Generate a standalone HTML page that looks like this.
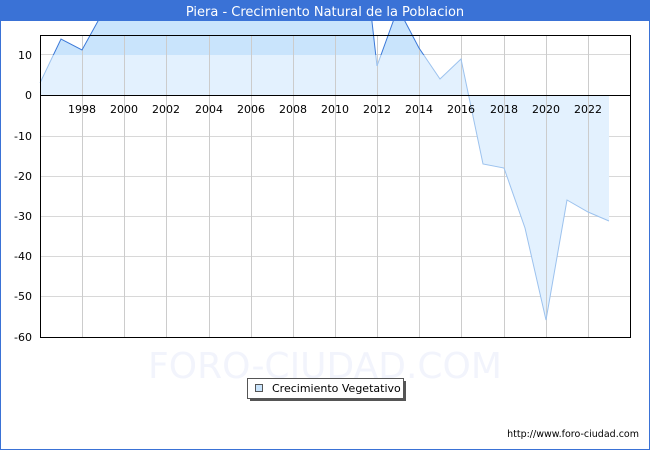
<!DOCTYPE html>
<html><head><meta charset="utf-8"><style>
body{margin:0;width:650px;height:450px;overflow:hidden;background:#fff;font-family:"DejaVu Sans","Liberation Sans",sans-serif;}
</style></head><body>
<svg width="650" height="450" xmlns="http://www.w3.org/2000/svg" style="position:absolute;left:0;top:0">
<defs>
<clipPath id="top"><rect x="0" y="0" width="650" height="55"/></clipPath>
<clipPath id="bot"><rect x="0" y="55" width="650" height="300"/></clipPath>
</defs>
<rect x="0.5" y="0.5" width="649" height="449" fill="#fff" stroke="#3a72d6"/>
<text x="325" y="378" font-size="36" fill="#f2f4fc" text-anchor="middle">FORO-CIUDAD.COM</text>
<g stroke="#d8d8d8" stroke-width="1">
<line x1="40" y1="136.5" x2="630" y2="136.5"/><line x1="40" y1="176.5" x2="630" y2="176.5"/><line x1="40" y1="216.5" x2="630" y2="216.5"/><line x1="40" y1="256.5" x2="630" y2="256.5"/><line x1="40" y1="296.5" x2="630" y2="296.5"/><line x1="40" y1="54.5" x2="630" y2="54.5"/>
</g>
<polygon points="40,83 61,39 82,50 103,12 124,-200 356,-120 377,66 398,8 419,48 440,79 461,59 483,164 504,168 525,228 546,320 567,200 588,212 609,221 609,96 40,96" clip-path="url(#bot)" fill="#e3f1fe"/>
<polygon points="40,83 61,39 82,50 103,12 124,-200 356,-120 377,66 398,8 419,48 440,79 461,59 483,164 504,168 525,228 546,320 567,200 588,212 609,221 609,96 40,96" clip-path="url(#top)" fill="#c9e4fc"/>
<g stroke="#cccccc" stroke-width="1">
<line x1="82.5" y1="35" x2="82.5" y2="337"/><line x1="124.5" y1="35" x2="124.5" y2="337"/><line x1="166.5" y1="35" x2="166.5" y2="337"/><line x1="209.5" y1="35" x2="209.5" y2="337"/><line x1="251.5" y1="35" x2="251.5" y2="337"/><line x1="293.5" y1="35" x2="293.5" y2="337"/><line x1="335.5" y1="35" x2="335.5" y2="337"/><line x1="377.5" y1="35" x2="377.5" y2="337"/><line x1="419.5" y1="35" x2="419.5" y2="337"/><line x1="461.5" y1="35" x2="461.5" y2="337"/><line x1="504.5" y1="35" x2="504.5" y2="337"/><line x1="546.5" y1="35" x2="546.5" y2="337"/><line x1="588.5" y1="35" x2="588.5" y2="337"/>
</g>
<polyline points="40,83 61,39 82,50 103,12 124,-200 356,-120 377,66 398,8 419,48 440,79 461,59 483,164 504,168 525,228 546,320 567,200 588,212 609,221" clip-path="url(#bot)" fill="none" stroke="#9cc2ee" stroke-width="1"/>
<polyline points="40,83 61,39 82,50 103,12 124,-200 356,-120 377,66 398,8 419,48 440,79 461,59 483,164 504,168 525,228 546,320 567,200 588,212 609,221" clip-path="url(#top)" fill="none" stroke="#3a78d8" stroke-width="1"/>
<rect x="0" y="0" width="650" height="21" fill="#3a72d6"/>
<text x="325" y="16" font-size="13" fill="#fff" text-anchor="middle">Piera - Crecimiento Natural de la Poblacion</text>
<rect x="40.5" y="35.5" width="590" height="302" fill="none" stroke="#000"/>
<line x1="40" y1="95.5" x2="630" y2="95.5" stroke="#000"/>
<g font-size="11" fill="#000" text-anchor="end">
<text x="32" y="59">10</text><text x="32" y="99">0</text><text x="32" y="140">-10</text><text x="32" y="180">-20</text><text x="32" y="220">-30</text><text x="32" y="260">-40</text><text x="32" y="300">-50</text><text x="32" y="341">-60</text>
</g>
<g font-size="11" fill="#000" text-anchor="middle">
<text x="82" y="113">1998</text><text x="124" y="113">2000</text><text x="166" y="113">2002</text><text x="209" y="113">2004</text><text x="251" y="113">2006</text><text x="293" y="113">2008</text><text x="335" y="113">2010</text><text x="377" y="113">2012</text><text x="419" y="113">2014</text><text x="461" y="113">2016</text><text x="504" y="113">2018</text><text x="546" y="113">2020</text><text x="588" y="113">2022</text>
</g>
<rect x="250" y="381" width="156" height="20" fill="#555"/>
<rect x="247.5" y="378.5" width="156" height="20" fill="#fff" stroke="#555"/>
<rect x="255.5" y="384.5" width="7" height="7" fill="#c9e4fc" stroke="#555"/>
<text x="272" y="392" font-size="11" fill="#000">Crecimiento Vegetativo</text>
<text x="639" y="437" font-size="9.5" fill="#000" text-anchor="end">http://www.foro-ciudad.com</text>
</svg>
</body></html>
